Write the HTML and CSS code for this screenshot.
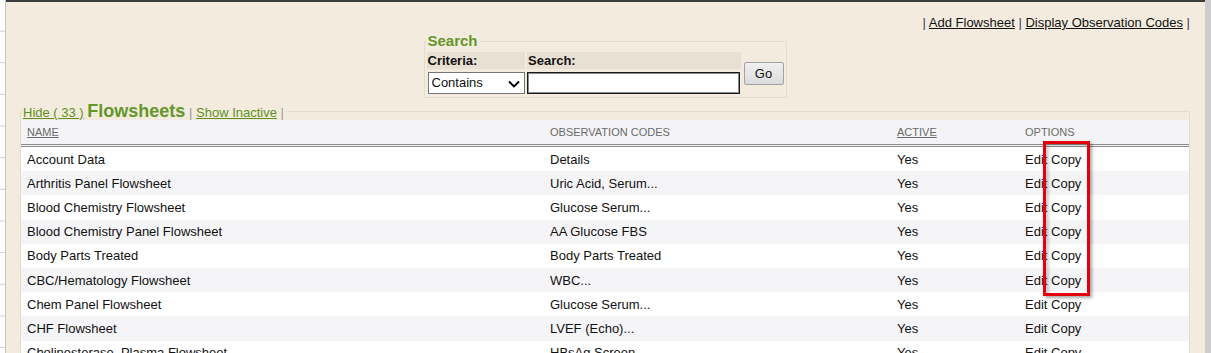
FILE: index.html
```html
<!DOCTYPE html>
<html lang="en">
	<head>
		<meta charset="UTF-8" />
		<title>Flowsheets</title>
		<link rel="stylesheet" href="styles.css">
	</head>
	<body>
		<div class="frame-strip"></div>

		<div class="main">
			<div class="top-links">
				<span class="pipe">|</span> <a href="#">Add Flowsheet</a>
				<span class="pipe">|</span> <a href="#">Display Observation Codes</a>
				<span class="pipe">|</span>
			</div>

			<fieldset class="search">
				<legend>Search</legend>
				<table>
					<tr>
						<th class="col-criteria">Criteria:</th>
						<th class="col-term">Search:</th>
						<td rowspan="2" class="col-go"><button>Go</button></td>
					</tr>
					<tr>
						<td>
							<div class="select-wrap">
								<select>
									<option>Contains</option>
									<option>Starts With</option>
									<option>Equals</option>
								</select>
								<svg class="chevron" width="12" height="8" viewBox="0 0 12 8">
									<path d="M1 1.5 L6 6.5 L11 1.5" fill="none" stroke="#000" stroke-width="1.8" />
								</svg>
							</div>
						</td>
						<td><input type="text" class="term" /></td>
					</tr>
				</table>
			</fieldset>

			<fieldset class="flowsheets">
				<legend>
					<a href="#" class="green">Hide ( 33 )</a>
					<span class="title">Flowsheets</span>
					<span class="pipe">|</span>
					<a href="#" class="green">Show Inactive</a>
					<span class="pipe">|</span>
				</legend>

				<div class="table-wrap">
					<table class="list">
						<thead>
							<tr>
								<th class="c-name"><a href="#">Name</a></th>
								<th class="c-codes">Observation Codes</th>
								<th class="c-active"><a href="#">Active</a></th>
								<th class="c-options">Options</th>
							</tr>
						</thead>
						<tbody id="rows"></tbody>
					</table>
					<div class="highlight"></div>
				</div>
			</fieldset>
		</div>

		<div class="scrollbar"></div>

		<script>
			const flowsheets = [
				["Account Data", "Details"],
				["Arthritis Panel Flowsheet", "Uric Acid, Serum..."],
				["Blood Chemistry Flowsheet", "Glucose Serum..."],
				["Blood Chemistry Panel Flowsheet", "AA Glucose FBS"],
				["Body Parts Treated", "Body Parts Treated"],
				["CBC/Hematology Flowsheet", "WBC..."],
				["Chem Panel Flowsheet", "Glucose Serum..."],
				["CHF Flowsheet", "LVEF (Echo)..."],
				["Cholinesterase, Plasma Flowsheet", "HBsAg Screen..."]
			];

			const tbody = document.getElementById("rows");
			for (let i = 0; i < flowsheets.length; i++) {
				const tr = document.createElement("tr");
				tr.innerHTML =
					"<td>" + flowsheets[i][0] + "</td>" +
					"<td>" + flowsheets[i][1] + "</td>" +
					"<td>Yes</td>" +
					"<td>Edit Copy</td>";
				tbody.appendChild(tr);
			}
		</script>
	</body>
</html>
```

FILE: styles.css
```css
html,
body {
	margin: 0;
	height: 353px;
	overflow: hidden;
}

body {
	display: flex;
	font-family: "Liberation Sans", Arial, sans-serif;
	font-size: 13px;
	color: #111;
}

.frame-strip {
	width: 5px;
	flex: none;
	border-right: 1px solid #c4c4c4;
	background: repeating-linear-gradient(to bottom, #fff 0 31px, #cfcfcf 31px 32px) 0 0 / 100% 31.65px;
}

.main {
	flex: 1;
	min-width: 0;
	background: #f3ecde;
	border-top: 2px solid #3c3c3c;
	padding: 0 15px 0 14px;
}

.scrollbar {
	width: 6px;
	flex: none;
	background: #cdcdcd;
}

/* top links */
.top-links {
	text-align: right;
	padding-top: 13px;
	line-height: 15px;
}

.top-links a {
	color: #111;
}

.top-links .pipe {
	color: #33395a;
}

/* search box */
fieldset.search {
	width: 361px;
	margin: 2px auto 0;
	padding: 0 0 1px;
	border: 1px solid #e3ddd0;
}

fieldset.search legend {
	font-size: 15px;
	font-weight: bold;
	line-height: 18px;
	color: #65962a;
	padding: 0 2px;
	margin-left: 1px;
}

fieldset.search table {
	border-spacing: 2px;
}

fieldset.search th {
	background: #e8e1d3;
	text-align: left;
	font-size: 13px;
	height: 17px;
	padding: 0 1px;
	line-height: 17px;
}

fieldset.search td {
	padding: 0;
	height: 23px;
}

.col-criteria {
	width: 97px;
}

.col-term {
	width: 212px;
}

.col-go {
	vertical-align: middle;
	padding-left: 1px !important;
}

.select-wrap {
	position: relative;
}

.select-wrap select {
	appearance: none;
	display: block;
	width: 97px;
	height: 22px;
	margin-left: 1px;
	padding: 0 0 0 3px;
	border: 1px solid #767676;
	border-radius: 0;
	background: #fff;
	font-family: inherit;
	font-size: 13px;
	color: #111;
}

.select-wrap .chevron {
	position: absolute;
	right: 5px;
	top: 8px;
	pointer-events: none;
}

input.term {
	display: block;
	box-sizing: border-box;
	width: 213px;
	height: 22px;
	margin: 0;
	border: 1px solid #1a1a1a;
	box-shadow: inset 0 0 0 1px #8a8a8a;
	background: #fff;
}

.col-go button {
	display: block;
	width: 40px;
	height: 23px;
	padding: 0;
	font-family: inherit;
	font-size: 13px;
	color: #111;
	border: 1px solid #a3a3a3;
	border-radius: 2px;
	background: linear-gradient(#f0f0f0, #dcdcdc);
}

/* flowsheet list */
fieldset.flowsheets {
	position: relative;
	margin: 4px 0 0;
	padding: 0;
	border: 1px solid #e3ddd0;
	border-bottom: none;
}

fieldset.flowsheets legend {
	height: 18px;
	padding: 0 2px;
	line-height: 18px;
	white-space: nowrap;
}

a.green {
	color: #5f8f22;
}

.flowsheets .title {
	font-size: 18px;
	line-height: 18px;
	font-weight: bold;
	color: #65962a;
}

.flowsheets legend .pipe {
	color: #9a9a9a;
}

.table-wrap {
	position: relative;
}

table.list {
	width: 100%;
	border-collapse: collapse;
	table-layout: fixed;
	background: #fff;
}

table.list th {
	height: 24px;
	padding: 0 0 0 6px;
	background: #f4f4f6;
	border-bottom: 3px double #8c8c8c;
	text-align: left;
	font-size: 11px;
	font-weight: normal;
	text-transform: uppercase;
	color: #6a6a6a;
}

table.list th a {
	color: #6a6a6a;
}

.c-name {
	width: 517px;
}

.c-codes {
	width: 341px;
}

.c-active {
	width: 122px;
}

table.list td {
	height: 24.2px;
	padding: 0 0 0 6px;
	white-space: nowrap;
}

table.list tbody tr:nth-child(even) td {
	background: #f5f5f7;
}

/* red annotation frame over the Copy links */
.highlight {
	position: absolute;
	left: 1022px;
	top: 21px;
	width: 41px;
	height: 149px;
	border: 3px solid #e5000c;
	box-shadow: 2px 2px 3px rgba(0, 0, 0, 0.35), inset 3px 2px 3px rgba(0, 0, 0, 0.18);
}
```
